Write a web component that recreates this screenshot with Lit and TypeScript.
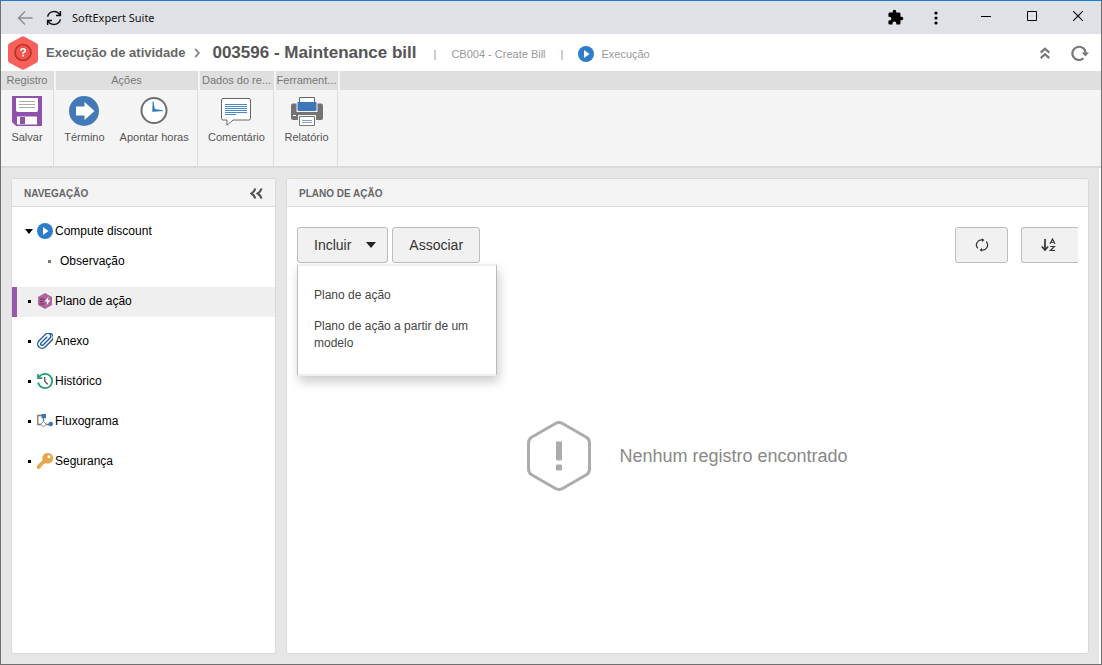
import { LitElement, html, css, TemplateResult } from "lit";
import { customElement, property, state } from "lit/decorators.js";
import { classMap } from "lit/directives/class-map.js";

const icons: Record<string, TemplateResult> = {
  back: html`<svg width="16" height="16" viewBox="0 0 16 16" fill="none" stroke="#8a8c90" stroke-width="1.4"><path d="M15.5 8H1.5M8 1.5L1.5 8L8 14.5"/></svg>`,
  sync: html`<svg width="16" height="16" viewBox="0 0 16 16" fill="none" stroke="#111" stroke-width="1.5"><path d="M1.6 6.6A6.6 6.6 0 0 1 13.8 5M14.4 9.4A6.6 6.6 0 0 1 2.2 11M14.4 1V5.4H10M1.6 15V10.6H6"/></svg>`,
  puzzle: html`<svg width="17" height="17" viewBox="0 0 24 24" fill="#000"><path d="M20.5 11H19V7c0-1.1-.9-2-2-2h-4V3.500a2.500 2.500 0 0 0-5 0V5H4c-1.100 0-1.990.900-1.990 2v3.800H3.500c1.490 0 2.700 1.210 2.700 2.700s-1.210 2.700-2.700 2.700H2V20c0 1.100.900 2 2 2h3.800v-1.500c0-1.490 1.210-2.700 2.700-2.700s2.700 1.210 2.700 2.700V22H17c1.100 0 2-.900 2-2v-4h1.500a2.500 2.500 0 0 0 0-5z"/></svg>`,
  dots: html`<svg width="4" height="14" viewBox="0 0 4 14" fill="#000"><circle cx="2" cy="2" r="1.600"/><circle cx="2" cy="7" r="1.600"/><circle cx="2" cy="12" r="1.600"/></svg>`,
  minimize: html`<svg width="10" height="10" viewBox="0 0 10 10"><path d="M0 5.500H10" stroke="#000"/></svg>`,
  maximize: html`<svg width="10" height="10" viewBox="0 0 10 10"><path d="M.5.500h9v9h-9z" fill="none" stroke="#000"/></svg>`,
  close: html`<svg width="10" height="10" viewBox="0 0 10 10"><path d="M0 0L10 10M10 0L0 10" stroke="#000" stroke-width="1.100"/></svg>`,
  logo: html`<svg width="30" height="34" viewBox="0 0 30 34"><path d="M13.500.700Q15-.200 16.500.700L28.500 7.300Q30 8.200 30 9.800V24.200Q30 25.800 28.500 26.700L16.500 33.300Q15 34.200 13.500 33.300L1.500 26.700Q0 25.800 0 24.200V9.800Q0 8.200 1.500 7.300Z" fill="#f9605a"/><circle cx="15" cy="16.500" r="8" fill="#f0544c" stroke="#b8342c" stroke-width="1.700"/><path d="M12.900 14.800Q12.900 12.800 15.100 12.800Q17.200 12.800 17.200 14.500Q17.200 15.800 15.100 16.800V17.700M15.100 18.800V20.500" fill="none" stroke="#fff" stroke-width="1.600"/></svg>`,
  crumb: html`<svg width="7" height="10" viewBox="0 0 7 10" fill="none" stroke="#888" stroke-width="1.900"><path d="M1.200.800L4.800 5L1.200 9.200"/></svg>`,
  play: html`<svg width="16" height="16" viewBox="0 0 16 16"><circle cx="8" cy="8" r="8" fill="#2e7dcc"/><path d="M6 4L11.500 8L6 12Z" fill="#fff"/></svg>`,
  collapseUp: html`<svg width="10" height="12" viewBox="0 0 10 12" fill="none" stroke="#777" stroke-width="2.200"><path d="M.700 5.600L5 1.700L9.300 5.600M.700 11.100L5 7.200L9.300 11.100"/></svg>`,
  reload: html`<svg width="18" height="16" viewBox="0 0 18 16"><path d="M12.500 13.200A6.600 6.600 0 1 1 14.600 8.500" fill="none" stroke="#777" stroke-width="2.200"/><path d="M10.800 7.500H18L14.400 11.600Z" fill="#777"/></svg>`,
  save: html`<svg width="30" height="30" viewBox="0 0 30 30"><path d="M0 0H30V30H4L0 26Z" fill="#8e51ac"/><path d="M4 2H26V14Q26 16 24 16H6Q4 16 4 14Z" fill="#fff"/><path d="M7 5.500H23M7 8.500H23M7 11.500H23" stroke="#aaa"/><path d="M5 20.500H25V28.500H5Z" fill="#fff"/><path d="M8 21H13V28H8Z" fill="#8e51ac"/></svg>`,
  arrow: html`<svg width="30" height="30" viewBox="0 0 30 30"><circle cx="15" cy="15" r="15" fill="#4379b6"/><path d="M7 10.500H15.500V6L25.500 15L15.500 24V19.500H7Z" fill="#fff"/></svg>`,
  clock: html`<svg width="30" height="30" viewBox="0 0 30 30"><circle cx="15" cy="14.500" r="12.500" fill="#fff" stroke="#6d6d6d" stroke-width="2"/><path d="M14 5.500L15.600 13.300L24 14.700L13.600 15.400Z" fill="#2e77ba" stroke="#2e77ba" stroke-width=".6"/></svg>`,
  comment: html`<svg width="30" height="30" viewBox="0 0 30 30"><path d="M2 2.500H28Q29.500 2.500 29.500 4V22.500Q29.500 24 28 24H12L6 29.200V24H2Q.5 24 .5 22.500V4Q.5 2.500 2 2.500Z" fill="#fff" stroke="#666"/><path d="M4 8.500H26M4 10.500H26M4 12.500H26M4 14.500H26M4 16.500H26M4 18.500H15" stroke="#4a86c4"/></svg>`,
  printer: html`<svg width="32" height="30" viewBox="0 0 32 30"><path d="M2 7.500H30Q32 7.500 32 9.500V22Q32 24 30 24H2Q0 24 0 22V9.500Q0 7.500 2 7.500Z" fill="#737373"/><path d="M8.500 1.500H23.500V8H8.500Z" fill="#fff" stroke="#666"/><path d="M5.500 6H26.500V16H5.500Z" fill="#f4f4f4"/><path d="M6.500 6H25.500V13.500Q25.500 15 24 15H8Q6.500 15 6.500 13.500Z" fill="#3c78b8"/><path d="M2 19.500H5" stroke="#fff"/><path d="M7 19H25V24.500H7Z" fill="#f4f4f4"/><path d="M8.500 20.500H23.500V29.500H8.500Z" fill="#fff" stroke="#777"/><path d="M11 24.500H21M11 26.500H21" stroke="#78a4d2"/></svg>`,
  collapseLeft: html`<svg width="13" height="11" viewBox="0 0 13 11" fill="none" stroke="#555" stroke-width="2.200"><path d="M5.300.500Q4.500 3.500 1.500 5.500Q4.500 7.500 5.300 10.500M11.500.500Q10.700 3.500 7.700 5.500Q10.700 7.500 11.500 10.500"/></svg>`,
  plan: html`<svg width="16" height="16" viewBox="0 0 16 16"><path d="M8 0L15 4V12L8 16L1 12V4Z" fill="#b0649c"/><path d="M3 6H7.500M3 8.500H6.500M3 11H7.500" stroke="#693358"/><path d="M11.500 3.500L7.800 8.600H10.200L9.500 12.500L13.300 7.300H10.900Z" fill="#fff"/></svg>`,
  clip: html`<svg width="16" height="16" viewBox="1 1 22 22" fill="none" stroke="#1d58a2" stroke-width="1.900"><path d="M21.440 11.050l-9.190 9.190a6 6 0 0 1-8.490-8.490l9.190-9.190a4 4 0 0 1 5.660 5.660l-9.200 9.190a2 2 0 0 1-2.830-2.830l8.490-8.480M12.950 2.560a5.500 5.500 0 0 1 8.490 8.490"/></svg>`,
  history: html`<svg width="16" height="16" viewBox="0 0 16 16" fill="none"><path d="M2 4.200A7.100 7.100 0 1 1 1.100 9.500M1 1V5.200H5.400" stroke="#2f9e78" stroke-width="1.800"/><path d="M7.800 4V8.300L10.800 11.300" stroke="#333" stroke-width="1.100"/></svg>`,
  flow: html`<svg width="16" height="16" viewBox="0 0 16 16"><path d="M5 2.500H.800V11.500H4.500M6.500 5V9M8.500 11.500H13" fill="none" stroke="#777" stroke-width="1.300"/><path d="M4.500 1H9V5.300H4.500Z" fill="#3c78b8"/><path d="M6.500 8.500L9.300 11.300L6.500 14L3.700 11.300Z" fill="#fff" stroke="#888"/><circle cx="13.700" cy="11" r="2.300" fill="#3c78b8"/></svg>`,
  key: html`<svg width="16" height="16" viewBox="0 0 16 16"><path fill-rule="evenodd" d="M10.500 0A5.300 5.300 0 1 1 8.500 10L7.500 11H6V12.700H4.300V14.300L2.800 15.800H0V12.800L5.600 7.200A5.300 5.300 0 0 1 10.500 0ZM12 2.300A1.500 1.500 0 1 0 12 5.300A1.500 1.500 0 0 0 12 2.300Z" fill="#e6a84e"/></svg>`,
  caret: html`<svg width="10" height="6" viewBox="0 0 10 6"><path d="M0 0H10L5 6Z" fill="#222"/></svg>`,
  refresh: html`<svg width="14" height="14" viewBox="0 0 14 14" fill="none" stroke="#333" stroke-width="1.200"><path d="M2.800 10.300A5 5 0 0 1 7.500 2M11.200 3.700A5 5 0 0 1 6.500 12"/><path d="M6.800.300L9.500 2.100L7 4ZM7.200 13.700L4.500 11.900L7 10Z" fill="#333" stroke="none"/></svg>`,
  sort: html`<svg width="15" height="14" viewBox="0 0 15 14" fill="none" stroke="#333"><path d="M4 1V11" stroke-width="1.700"/><path d="M.8 8.500L4 12L7.200 8.500" stroke-width="1.600"/><path d="M9 6L11.500 .9L14 6M10 4.300H13M9.300 8.500H13.500L9.300 12.500H14" stroke-width="1.100"/></svg>`,
  empty: html`<svg width="64" height="70" viewBox="0 0 64 70"><path d="M28.500 2.500Q32 .5 35.500 2.500L59 16Q62.500 18 62.500 22V48Q62.500 52 59 54L35.500 67.500Q32 69.500 28.500 67.500L5 54Q1.500 52 1.500 48V22Q1.500 18 5 16Z" fill="none" stroke="#acacac" stroke-width="3"/><path d="M29.500 20.500H34.500Q35 20.500 35 21V38Q35 39.500 33.500 39.500H30.500Q29 39.500 29 38V21Q29 20.500 29.500 20.500ZM30 43.500H34Q35 43.500 35 44.500V48.500Q35 49.500 34 49.500H30Q29 49.500 29 48.500V44.500Q29 43.500 30 43.500Z" fill="#acacac"/></svg>`,
};

const reset = css`
  *, *::before, *::after { box-sizing: border-box; }
  svg { display: block; flex: none; }
  button { font: inherit; color: inherit; background: none; border: 0; padding: 0; margin: 0; cursor: pointer; }
  a { color: inherit; text-decoration: none; }
  ul { list-style: none; margin: 0; padding: 0; }
  h1, h2, p { margin: 0; font-weight: inherit; font-size: inherit; }
`;

@customElement("window-bar")
class WindowBar extends LitElement {
  static styles = [reset, css`
    :host { display: flex; align-items: center; height: 33px; padding: 0 18px 0 16px; background: #dee1e6; }
    .title { flex: 1; margin-left: 10px; font: 11px/16px "Segoe UI", "Noto Sans", sans-serif; color: #111; }
    .sync { margin-left: 13px; }
    .tools, .frame { display: flex; align-items: center; }
    .tools { gap: 30px; margin-right: 43px; }
    .frame { gap: 36px; padding-bottom: 4px; }
  `];
  render() {
    return html`
      <button aria-label="Voltar">${icons.back}</button>
      <button class="sync" aria-label="Recarregar">${icons.sync}</button>
      <span class="title">SoftExpert Suite</span>
      <div class="tools">
        <button aria-label="Extensões">${icons.puzzle}</button>
        <button aria-label="Mais opções">${icons.dots}</button>
      </div>
      <div class="frame">
        <button aria-label="Minimizar">${icons.minimize}</button>
        <button aria-label="Maximizar">${icons.maximize}</button>
        <button aria-label="Fechar">${icons.close}</button>
      </div>`;
  }
}

@customElement("activity-header")
class ActivityHeader extends LitElement {
  static styles = [reset, css`
    :host { display: flex; align-items: center; height: 37px; padding: 0 12px 0 7px; background: #fff; color: #555; white-space: nowrap; }
    .area { margin: 0 9px 0 8px; font-size: 13px; font-weight: bold; color: #666; }
    .name { margin-left: 11px; font-size: 17px; font-weight: bold; }
    .meta { display: flex; align-items: center; gap: 15px; margin-left: 17px; padding-top: 3px; font-size: 11px; color: #999; }
    .status { display: flex; align-items: center; gap: 7px; }
    .actions { display: flex; align-items: center; gap: 21px; margin-left: auto; }
  `];
  render() {
    return html`
      ${icons.logo}
      <span class="area">Execução de atividade</span>
      ${icons.crumb}
      <h1 class="name">003596 - Maintenance bill</h1>
      <div class="meta">
        <span>|</span><span>CB004 - Create Bill</span><span>|</span>
        <span class="status">${icons.play}<span>Execução</span></span>
      </div>
      <div class="actions">
        <button aria-label="Recolher">${icons.collapseUp}</button>
        <button aria-label="Atualizar">${icons.reload}</button>
      </div>`;
  }
}

interface RibbonGroup { title: string; kind: string; items: { icon: string; label: string }[]; }

@customElement("action-ribbon")
class ActionRibbon extends LitElement {
  static styles = [reset, css`
    :host { display: flex; gap: 2px; height: 97px; background: #f4f4f4; border-bottom: 2px solid #dadada; font-size: 11px; }
    .group { border-right: 1px solid #dcdcdc; }
    .registro { width: 53px; }
    .acoes { width: 142px; }
    .dados { width: 74px; }
    .ferramentas { width: 62px; }
    .heading { height: 19px; line-height: 19px; white-space: nowrap; text-align: center; background: #dfdfdf; color: #777; }
    .filler { flex: 1; height: 19px; background: #dfdfdf; }
    .items { display: flex; justify-content: center; gap: 15px; padding-top: 6px; }
    .item { display: flex; flex-direction: column; align-items: center; gap: 4px; line-height: 14px; color: #555; white-space: nowrap; }
  `];
  private groups: RibbonGroup[] = [
    { title: "Registro", kind: "registro", items: [{ icon: "save", label: "Salvar" }] },
    { title: "Ações", kind: "acoes", items: [{ icon: "arrow", label: "Término" }, { icon: "clock", label: "Apontar horas" }] },
    { title: "Dados do re...", kind: "dados", items: [{ icon: "comment", label: "Comentário" }] },
    { title: "Ferrament...", kind: "ferramentas", items: [{ icon: "printer", label: "Relatório" }] },
  ];
  render() {
    return html`
      ${this.groups.map((g) => html`
        <section class="group ${g.kind}">
          <h2 class="heading">${g.title}</h2>
          <div class="items">
            ${g.items.map((i) => html`<button class="item">${icons[i.icon]}<span>${i.label}</span></button>`)}
          </div>
        </section>`)}
      <div class="filler"></div>`;
  }
}

@customElement("side-panel")
class SidePanel extends LitElement {
  static styles = [reset, css`
    :host { display: flex; flex-direction: column; background: #fff; border: 1px solid #dadada; border-radius: 3px; }
    .bar { display: flex; align-items: center; justify-content: space-between; height: 28px; padding: 2px 12px 0; background: #f4f4f4; border-bottom: 1px solid #dadada; border-radius: 2px 2px 0 0; }
    .caption { font-size: 10px; font-weight: bold; color: #666; text-transform: uppercase; }
    .body { flex: 1; display: flex; flex-direction: column; }
  `];
  @property() caption = "";
  @property({ type: Boolean }) collapsible = false;
  render() {
    return html`
      <header class="bar">
        <h2 class="caption">${this.caption}</h2>
        ${this.collapsible ? html`<button aria-label="Recolher navegação">${icons.collapseLeft}</button>` : ""}
      </header>
      <div class="body"><slot></slot></div>`;
  }
}

@customElement("nav-tree")
class NavTree extends LitElement {
  static styles = [reset, css`
    :host { display: block; padding-top: 10px; font-size: 12px; color: #000; }
    .tree { display: flex; flex-direction: column; gap: 10px; }
    .row { display: flex; align-items: center; height: 30px; padding: 0 0 2px 8px; border-left: 5px solid transparent; }
    .selected { background: #efefef; border-left-color: #9657ad; }
    .mark { display: flex; justify-content: center; width: 8px; margin-right: 4px; }
    .label { margin-left: 2px; }
    .dot { width: 3px; height: 3px; background: #000; }
    .child { padding-left: 31px; gap: 9px; }
    .child .dot { background: #777; }
  `];
  @state() private current = "Plano de ação";
  private items = [
    { icon: "play", label: "Compute discount", children: ["Observação"] },
    { icon: "plan", label: "Plano de ação" },
    { icon: "clip", label: "Anexo" },
    { icon: "history", label: "Histórico" },
    { icon: "flow", label: "Fluxograma" },
    { icon: "key", label: "Segurança" },
  ] as { icon: string; label: string; children?: string[] }[];
  private pick(e: Event, label: string) { e.preventDefault(); this.current = label; }
  render() {
    return html`<nav><ul class="tree">
      ${this.items.map((i) => html`<li>
        <a href="#" class=${classMap({ row: true, selected: i.label === this.current })} @click=${(e: Event) => this.pick(e, i.label)}>
          <span class="mark">${i.children
            ? html`<svg width="8" height="5" viewBox="0 0 8 5"><path d="M0 0H8L4 5Z"/></svg>`
            : html`<span class="dot"></span>`}</span>
          ${icons[i.icon]}<span class="label">${i.label}</span>
        </a>
        ${i.children ? html`<ul>${i.children.map((c) => html`<li>
          <a href="#" class="row child" @click=${(e: Event) => this.pick(e, c)}><span class="dot"></span>${c}</a></li>`)}</ul>` : ""}
      </li>`)}
    </ul></nav>`;
  }
}

@customElement("plan-view")
class PlanView extends LitElement {
  static styles = [reset, css`
    :host { flex: 1; display: flex; flex-direction: column; padding: 20px 10px 4px; }
    .toolbar { display: flex; gap: 4px; }
    .button { display: flex; align-items: center; justify-content: center; height: 36px; padding: 0 16px; border: 1px solid #bdbdbd; border-radius: 3px; background: #f1f1f1; font-size: 14px; color: #333; }
    .split { gap: 15px; padding-right: 11px; }
    .menu-anchor { position: relative; }
    .menu { position: absolute; z-index: 1; top: 100%; left: 0; display: flex; flex-direction: column; gap: 14px; width: 200px; margin-top: 1px; padding: 21px 16px 22px; background: #fff; border: 1px solid #bbb; border-width: 2px 1px; border-top-color: #f0f0f0; border-bottom-color: #eee; box-shadow: 2px 6px 10px rgba(0, 0, 0, 0.2); }
    .option { display: block; width: 100%; font-size: 12px; line-height: 17px; text-align: left; color: #444; }
    .right { display: flex; gap: 13px; margin-left: auto; }
    .icon { width: 53px; }
    .edge { width: 57px; padding-right: 19px; border-right: 0; border-radius: 3px 0 0 3px; }
    .empty { flex: 1; display: flex; align-items: center; justify-content: center; gap: 28px; font-size: 18px; color: #888; }
  `];
  @state() private open = true;
  render() {
    return html`
      <div class="toolbar">
        <div class="menu-anchor">
          <button class="button split" aria-expanded=${this.open} @click=${() => (this.open = !this.open)}>Incluir ${icons.caret}</button>
          ${this.open ? html`<ul class="menu">
            <li><button class="option">Plano de ação</button></li>
            <li><button class="option">Plano de ação a partir de um modelo</button></li>
          </ul>` : ""}
        </div>
        <button class="button">Associar</button>
        <div class="right">
          <button class="button icon" aria-label="Atualizar">${icons.refresh}</button>
          <button class="button edge" aria-label="Ordenar">${icons.sort}</button>
        </div>
      </div>
      <div class="empty">${icons.empty}<p>Nenhum registro encontrado</p></div>`;
  }
}

@customElement("app-root")
class AppRoot extends LitElement {
  static styles = [reset, css`
    :host { box-sizing: border-box; display: flex; flex-direction: column; min-height: 100vh; border: 1px solid #707070; border-top-color: #1a7fd4; background: #fff; font-family: "Liberation Sans", Arial, sans-serif; }
    .content { flex: 1; display: grid; grid-template-columns: 265px minmax(0, 1fr); gap: 10px; margin-right: 2px; padding: 10px; background: #e6e6e6; }
  `];
  render() {
    return html`
      <window-bar></window-bar>
      <activity-header></activity-header>
      <action-ribbon></action-ribbon>
      <main class="content">
        <side-panel caption="Navegação" collapsible><nav-tree></nav-tree></side-panel>
        <side-panel caption="Plano de ação"><plan-view></plan-view></side-panel>
      </main>`;
  }
}
